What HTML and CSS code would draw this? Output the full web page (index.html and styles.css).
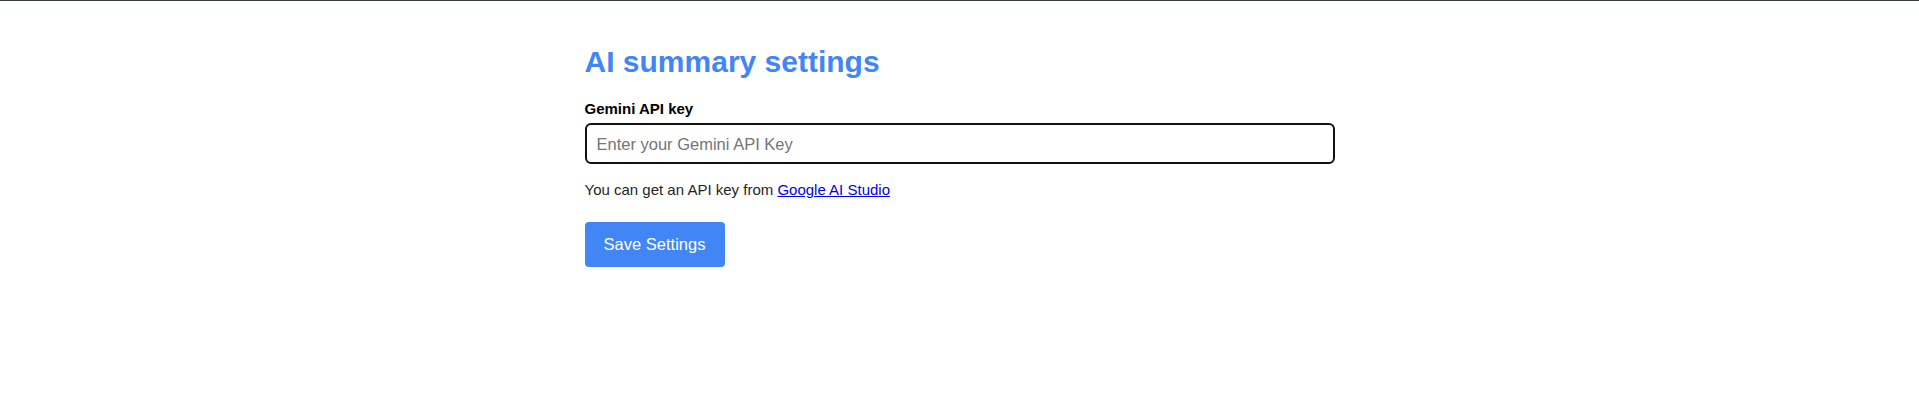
FILE: index.html
```html
<!DOCTYPE html>
<html>
<head>
<meta charset="utf-8">
<link rel="stylesheet" href="styles.css">
</head>
<body>
<div class="topline"></div>
<main class="settings">
  <h1 class="title">AI summary settings</h1>
  <label class="label" for="key">Gemini API key</label>
  <input class="field" id="key" type="text" placeholder="Enter your Gemini API Key">
  <p class="hint">You can get an API key from <a href="#" class="link">Google AI Studio</a></p>
  <button class="save">Save Settings</button>
</main>
</body>
</html>
```
FILE: styles.css
```css
html, body {
  margin: 0;
  padding: 0;
  background: #ffffff;
  font-family: "Liberation Sans", Arial, sans-serif;
}
.topline {
  height: 1px;
  background: #35403c;
}
.settings {
  width: 750px;
  margin: 0 auto;
  padding-top: 43px;
  display: flex;
  flex-direction: column;
  align-items: flex-start;
}
.title {
  margin: 0;
  font-size: 30px;
  line-height: 36px;
  font-weight: 700;
  color: #4285f4;
}
.label {
  margin-top: 20px;
  font-size: 15px;
  font-weight: 700;
  line-height: 18px;
  color: #000;
}
.field {
  box-sizing: border-box;
  margin-top: 5px;
  width: 750px;
  height: 41px;
  border: 2px solid #111;
  border-radius: 6px;
  padding: 2px 10px 0;
  font-family: "Liberation Sans", Arial, sans-serif;
  font-size: 16.5px;
  color: #000;
  outline: none;
  background: #fff;
}
.field::placeholder {
  color: #757575;
}
.hint {
  margin: 17px 0 0;
  font-size: 15px;
  line-height: 18px;
  color: #1f1f1f;
}
.link {
  color: #0000ee;
}
.save {
  margin-top: 23px;
  width: 140px;
  height: 45px;
  padding: 0;
  border: none;
  border-radius: 4px;
  background: #4285f4;
  color: #fff;
  font-family: "Liberation Sans", Arial, sans-serif;
  font-size: 16.5px;
  cursor: pointer;
}
```
